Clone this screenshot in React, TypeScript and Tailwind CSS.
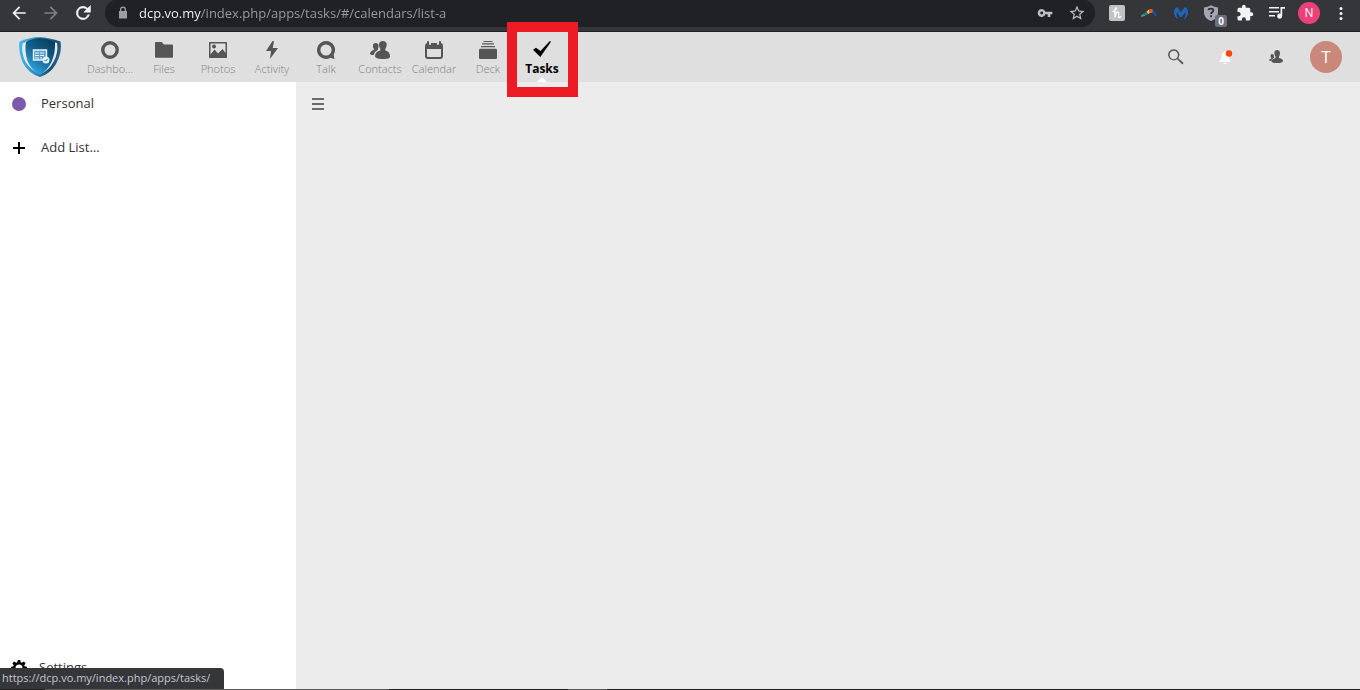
import type { ReactNode } from "react";

function Svg({ box = "0 0 24 24", className, children }: { box?: string; className: string; children: ReactNode }) {
  return (
    <svg viewBox={box} className={className} fill="currentColor" aria-hidden="true">
      {children}
    </svg>
  );
}

function ToolButton({ label, className = "", children }: { label: string; className?: string; children: ReactNode }) {
  return (
    <button type="button" aria-label={label} className={`relative flex h-8 w-8 shrink-0 items-center justify-center ${className}`}>
      {children}
    </button>
  );
}

function BrowserBar() {
  return (
    <div className="h-8 border-b border-[#1f2023] bg-[#35363a] text-[#f1f3f4]">
      <div className="flex h-[26px] items-center pl-[3px] pr-[3px]">
        <ToolButton label="Back">
          <Svg className="h-5 w-5">
            <path d="M20 11H7.8l5.6-5.6L12 4l-8 8 8 8 1.4-1.4L7.8 13H20z" />
          </Svg>
        </ToolButton>
        <ToolButton label="Forward" className="text-[#7f8083]">
          <Svg className="h-5 w-5">
            <path d="M4 11h12.200l-5.600-5.600L12 4l8 8-8 8-1.400-1.400 5.600-5.600H4z" />
          </Svg>
        </ToolButton>
        <ToolButton label="Reload">
          <Svg className="h-5 w-5">
            <path d="M17.650 6.350A8 8 0 1 0 19.730 14h-2.080A6 6 0 1 1 12 6c1.660 0 3.140.690 4.220 1.780L13 11h8V3z" stroke="currentColor" strokeWidth=".6" />
          </Svg>
        </ToolButton>
        <div className="ml-1.5 mr-1.5 flex h-7 min-w-0 flex-1 items-center rounded-full bg-[#202124] pl-2.5 text-[#bdbfc2]">
          <Svg box="0 0 16 16" className="mr-2 h-4 w-4 shrink-0 text-[#9aa0a6]">
            <path d="M5 6V4.500a3 3 0 0 1 6 0V6h1v7.500H4V6zm1.300 0h3.400V4.500a1.700 1.700 0 0 0-3.400 0z" />
          </Svg>
          <input
            type="text"
            aria-label="Address"
            defaultValue="dcp.vo.my/index.php/apps/tasks/#/calendars/list-a"
            className="h-6 min-w-0 flex-1 bg-[linear-gradient(90deg,#ffffff_62px,#9aa0a6_62px)] bg-clip-text text-[13px] text-transparent caret-white outline-none"
          />
          <ToolButton label="Passwords">
            <Svg className="h-4 w-4">
              <path d="M12.650 10A6 6 0 1 0 12.650 14H16v4h4v-4h3v-4zM7 14.200a2.200 2.200 0 1 1 0-4.400 2.200 2.200 0 0 1 0 4.400z" />
            </Svg>
          </ToolButton>
          <ToolButton label="Bookmark this page" className="mr-0.5">
            <Svg className="h-[18px] w-[18px]">
              <path d="M22 9.240l-7.190-.620L12 2 9.190 8.630 2 9.240l5.460 4.730L5.820 21 12 17.270 18.180 21l-1.630-7.030zM12 15.400l-3.760 2.270 1-4.280-3.320-2.880 4.380-.380L12 6.100l1.710 4.040 4.380.380-3.320 2.880 1 4.280z" />
            </Svg>
          </ToolButton>
        </div>
        <ToolButton label="Honey">
          <svg viewBox="0 0 16 16" className="h-4 w-4" aria-hidden="true">
            <rect width="16" height="16" rx="2" fill="#c3c3c3" />
            <path d="M4 6.500C6.500 6 8.200 3 7 2.800 5.600 2.800 6 7 6 12.500 6.300 9.500 7.500 7 9 7c1.500.2.200 3.600.7 5.200.4.600 1.300.4 2-.7" fill="none" stroke="#fff" strokeWidth="1.300" strokeLinecap="round" />
          </svg>
        </ToolButton>
        <ToolButton label="Boomerang">
          <svg viewBox="0 0 16 10" className="h-2.5 w-4" fill="none" aria-hidden="true">
            <path d="M0 9.300L.3 7 3 5.500 4.300 7.800z" fill="#34a853" />
            <path d="M3 5.500L5.500 3.500 7 6 4.300 7.800z" fill="#1976d2" />
            <path d="M5.500 3.500L8 1.500 9 5 7 6z" fill="#fbc02d" />
            <path d="M8 1.500Q10 .5 12 1.800L11.500 5 9 5z" fill="#ef5335" />
            <path d="M12 1.800Q14.500 4 16 8L14 8.200 11.500 5z" fill="#075ba5" />
          </svg>
        </ToolButton>
        <ToolButton label="Malwarebytes">
          <svg viewBox="0 0 16 14" className="h-3.5 w-4" aria-hidden="true">
            <path d="M4.300 1L8 6.500 11.700 1C14 2 15.200 4.300 15 7c-.1 3-1.800 5.300-4.500 6 1.800-2 2.400-4 1.700-7L8.700 11H7.300L3.800 6c-.7 3-.1 5 1.700 7C2.800 12.300 1.100 10 1 7 .800 4.300 2 2 4.300 1z" fill="#1e66bd" />
          </svg>
        </ToolButton>
        <ToolButton label="Privacy shield">
          <svg viewBox="0 0 16 16" className="mr-1 h-4 w-4" aria-hidden="true">
            <path d="M1 2.500Q5 2 8 .3q3 1.700 7 2.200V8q0 5-7 8-7-3-7-8z" fill="#a5a6b5" />
            <path d="M5.500 5.200Q5.700 3.700 8 3.700t2.300 1.700C10.300 7 8 7 8 9M8 10.300v1.900" fill="none" stroke="#2f3035" strokeWidth="1.800" />
          </svg>
          <span className="absolute right-0.5 bottom-0.5 flex h-3 w-3 items-center justify-center rounded-xs bg-[#6d6f7d] text-[10px] font-bold text-white">0</span>
        </ToolButton>
        <ToolButton label="Extensions">
          <Svg className="h-[18px] w-[18px]">
            <path d="M20.500 11H19V7a2 2 0 0 0-2-2h-4V3.500a2.500 2.500 0 0 0-5 0V5H4a2 2 0 0 0-1.990 2v3.800H3.500a2.700 2.700 0 0 1 0 5.400H2V20a2 2 0 0 0 2 2h3.800v-1.500a2.700 2.700 0 0 1 5.400 0V22H17a2 2 0 0 0 2-2v-4h1.500a2.500 2.500 0 0 0 0-5z" />
          </Svg>
        </ToolButton>
        <ToolButton label="Media controls">
          <Svg box="0 0 16 14" className="h-3.5 w-4">
            <path d="M0 1h10v1.600H0zM0 5h10v1.600H0zM0 9h6v1.600H0zM11.500 1H16v1.800h-2.800v7.400a2.500 2.500 0 1 1-1.700-2.400z" />
          </Svg>
        </ToolButton>
        <ToolButton label="Profile">
          <span className="flex h-[22px] w-[22px] items-center justify-center rounded-full bg-[#ec407a] text-xs text-white">N</span>
        </ToolButton>
        <ToolButton label="Browser menu">
          <Svg box="0 0 4 16" className="h-4 w-1">
            <circle cx="2" cy="3.500" r="1.500" />
            <circle cx="2" cy="8.500" r="1.500" />
            <circle cx="2" cy="13.500" r="1.500" />
          </Svg>
        </ToolButton>
      </div>
    </div>
  );
}

function Logo() {
  return (
    <svg viewBox="0 0 42 42" className="h-[42px] w-[42px]" aria-hidden="true">
      <defs>
        <linearGradient id="rim" x1="0" y1="0.300" x2="1" y2="0.500">
          <stop offset="0" stopColor="#42b5ea" />
          <stop offset="0.500" stopColor="#2b8bc2" />
          <stop offset="0.800" stopColor="#174d70" />
          <stop offset="1" stopColor="#2d6990" />
        </linearGradient>
        <linearGradient id="face" x1="0.900" y1="0" x2="0.300" y2="1">
          <stop offset="0" stopColor="#0c3854" />
          <stop offset="0.500" stopColor="#12628e" />
          <stop offset="1" stopColor="#35ace4" />
        </linearGradient>
      </defs>
      <path d="M21 1q9 .5 20.500 4.500Q43.500 16 37 28q-6 10-16 13Q10 38 4 27-1 16 .5 5.500 11 1 21 1z" fill="url(#rim)" />
      <path d="M21 3q8 .5 17 4 1.500 9-3 18-5 10-14 13Q11 34 6 25 2 16 3.500 7.500 12 3 21 3z" fill="#e7eaec" />
      <path d="M21 2q8 .500 15 4 .500 10-3 19-4 9-12 14Q12 34 8.500 25 5.500 15 7 6 14 2 21 2z" fill="url(#face)" />
      <path d="M14.500 14h13v10h-13z" fill="#5c9ec7" stroke="#e6f5fd" strokeWidth="1.400" />
      <path d="M16 17h10M16 19.500h10M16 22h7" stroke="#e6f5fd" strokeWidth="1" strokeDasharray="4 1" />
      <circle cx="27" cy="24" r="3.500" fill="#dff3fd" />
      <path d="M25.500 24l1.200 1.200 2.200-2.500" fill="none" stroke="#2a83b6" />
    </svg>
  );
}

const apps: { name: string; icon: ReactNode }[] = [
  { name: "Dashbo…", icon: <circle cx="10" cy="10" r="7.200" fill="none" stroke="currentColor" strokeWidth="3.400" /> },
  { name: "Files", icon: <path d="M1.500 2h6.300l2 2.500h8.400q.8 0 .8.800V17q0 .8-.8.800H1.800Q1 17.800 1 17V2.700q0-.7.500-.7z" /> },
  {
    name: "Photos",
    icon: (
      <path fillRule="evenodd" d="M1.500 2h17q.5 0 .5.500v15q0 .5-.5.500h-17Q1 18 1 17.500v-15q0-.5.500-.500zM2.500 3.500v11l4-5 3.500 4 4.500-4.500 3 4V3.500zM6 4.500a2 2 0 1 1 0 4 2 2 0 0 1 0-4z" />
    ),
  },
  { name: "Activity", icon: <path d="M10.500 1L4 11h5L8 19l8-11h-5.200l1.200-7z" /> },
  {
    name: "Talk",
    icon: <path fillRule="evenodd" d="M10 1a9 9 0 1 0 4.700 16.700q2 1.500 4 1-.8-1.700-1-4A9 9 0 0 0 10 1zm0 3.400a5.600 5.600 0 1 1 0 11.200 5.600 5.600 0 0 1 0-11.200z" />,
  },
  {
    name: "Contacts",
    icon: (
      <path d="M12.800 1C10.600 1 9 2.300 9 4.500c0 2 .6 3.300 1.300 4.200v1.800q-5 1.200-5.300 5.500c0 2 3 3 8 3s7-.7 7-2.500q0-5-4.700-6V8.700c.8-1 1.400-2.300 1.400-4.200C16.700 2.300 15 1 12.800 1zM5.700 3C4 3 2.900 4 2.900 5.700c0 1.500.4 2.200 1 3v1.300Q.3 11 0 13.500c0 1 1.500 1.500 3.600 1.500Q4.500 11.500 8 9.800V8.500c.3-.5.500-1 .500-2.800C8.500 4 7.500 3 5.700 3z" />
    ),
  },
  {
    name: "Calendar",
    icon: (
      <path fillRule="evenodd" d="M4 1q1 0 1 1v2q0 1 1 1t1-1V3h6v1q0 1 1 1t1-1V2q0-1 1-1t1 1v1q2 .3 2 2.500V16q0 3-3 3H4q-3 0-3-3V5.500Q1 3.500 3 3V2q0-1 1-1zM3 9v7q0 1 1 1h12q1 0 1-1V9z" />
    ),
  },
  { name: "Deck", icon: <path d="M5.500 1h9v1h-9zM4 3.300h12v1.200H4zM3 6h14v1.200H3zM1.700 8.800h16.600L19 10v8q0 1-1 1H2q-1 0-1-1v-8z" /> },
  { name: "Tasks", icon: <path d="M1 9.800L8.300 17 19 1.800 17.800 1 8.500 11 4 7.800z" /> },
];

function AppHeader() {
  return (
    <header className="flex h-[50px] items-center bg-[#dfdfdf] pl-[19px] pr-[18px]">
      <a href="#home" aria-label="Home" className="mr-[22px] shrink-0">
        <Logo />
      </a>
      <nav aria-label="Apps" className="flex h-full">
        {apps.map(({ name, icon }) => {
          const active = name === "Tasks";
          return (
            <a
              key={name}
              href={`#${name}`}
              aria-current={active ? "page" : undefined}
              className={`relative flex h-full w-[54px] flex-col items-center pt-2 ${active ? "text-xs font-bold text-black" : "text-[11px] font-light text-[#555555]"}`}
            >
              <Svg box="0 0 20 20" className="h-5 w-5">
                {icon}
              </Svg>
              <span className={`leading-[18px] ${active ? "" : "text-[#808080]"}`}>{name}</span>
              {active && (
                <>
                  <svg viewBox="0 0 10 5" className="absolute bottom-0 h-[5px] w-2.5" aria-hidden="true">
                    <path d="M0 5l5-5 5 5z" fill="#fff" />
                  </svg>
                  <span className="pointer-events-none absolute -top-2.5 -right-[9px] -bottom-[15px] -left-2 z-10 border-10 border-[#ed1c24]" />
                </>
              )}
            </a>
          );
        })}
      </nav>
      <div className="ml-auto flex items-center text-[#555555]">
        <button type="button" aria-label="Search" className="flex h-12 w-[50px] items-center justify-center">
          <Svg box="0 0 16 16" className="h-[18px] w-[18px]">
            <path fillRule="evenodd" d="M6 1a5 5 0 1 0 3 9l4.600 4.600 1.200-1.200L10 9A5 5 0 0 0 6 1zm0 1.500a3.700 3.700 0 1 1 0 7.400 3.700 3.700 0 0 1 0-7.400z" />
          </Svg>
        </button>
        <button type="button" aria-label="Notifications" className="flex h-12 w-[50px] items-center justify-center">
          <svg viewBox="0 0 16 16" className="h-4 w-4" aria-hidden="true">
            <path d="M7 2.500C4.500 3 3.700 5 3.700 7.500v2L1.500 12v1h11v-1L11 9.500v-4L8 2.500zM5 14q2 2 4 0z" fill="#fff" />
            <circle cx="11" cy="4.500" r="3.200" fill="#ff4402" />
          </svg>
        </button>
        <button type="button" aria-label="Contacts menu" className="flex h-12 w-[50px] items-center justify-center">
          <Svg box="0 0 16 16" className="h-4 w-4">
            <path d="M9 1Q6.500 1 6.300 4q.1 2 1.200 3.500V9q-3 .5-4 2.500-.5 2.500 5 2.500 6.500 0 6.500-2 0-2.200-4-3V7.500Q12 6 12 4 11.800 1 9 1zM4 5Q2.500 5 2.500 7q0 1 .8 1.800v.7Q1 10 1 11.300q0 .7 2 .7.500-2 3-3.200Q6.200 5 4 5z" />
          </Svg>
        </button>
        <button type="button" aria-label="Account" className="ml-[9px] flex h-8 w-8 items-center justify-center rounded-full bg-[#c98879] text-[17px] text-white">
          T
        </button>
      </div>
    </header>
  );
}

export default function App() {
  return (
    <div className="flex min-h-screen flex-col bg-[#ececec] font-['Open_Sans','Noto_Sans',sans-serif]">
      <BrowserBar />
      <AppHeader />
      <div className="flex flex-1">
        <aside className="flex w-[296px] shrink-0 flex-col bg-white text-[13px] text-[#333333]">
          <a href="#personal" className="flex h-11 items-center pl-3">
            <span className="mr-[15px] h-3.5 w-3.5 rounded-full bg-[#7c5aab]" />
            Personal
          </a>
          <button type="button" className="flex h-11 items-center pl-3 text-left">
            <Svg box="0 0 14 14" className="mr-[15px] h-3.5 w-3.5 text-black">
              <path d="M6 1h2v5h5v2H8v5H6V8H1V6h5z" />
            </Svg>
            Add List…
          </button>
          <button type="button" className="mt-auto flex h-[42px] items-center pl-[11px] text-left">
            <Svg box="0 0 16 16" className="mr-3 h-4 w-4 text-black">
              <path fillRule="evenodd" d="M6.800 0h2.400l.5 2.300 1.200.5 2-1.300 1.700 1.700-1.300 2 .5 1.200 2.200.4v2.400l-2.300.5-.5 1.200 1.300 2-1.700 1.700-2-1.300-1.200.5L9.200 16H6.800l-.5-2.200-1.200-.5-2 1.300-1.700-1.700 1.300-2-.5-1.200L0 9.200V6.800l2.200-.4.5-1.200-1.300-2 1.700-1.700 2 1.300 1.200-.5zM8 4.500a3.500 3.500 0 1 0 0 7 3.500 3.500 0 0 0 0-7z" />
            </Svg>
            Settings
          </button>
        </aside>
        <main className="flex-1">
          <button type="button" aria-label="Toggle navigation" className="flex h-11 w-11 items-center justify-center text-[#6b6b6b]">
            <Svg box="0 0 12 12" className="h-3 w-3">
              <path d="M0 0h12v2H0zM0 5h12v2H0zM0 10h12v2H0z" />
            </Svg>
          </button>
        </main>
      </div>
      <div className="flex h-px bg-[#1e1e1e]">
        <span className="ml-[45px] w-[344px] bg-[#5a5a5a]" />
        <span className="ml-[179px] w-[39px] bg-[#5a5a5a]" />
      </div>
      <div className="fixed bottom-px left-0 flex h-[21px] w-[224px] items-center rounded-tr bg-[#35363a] pl-0.5 text-[11px] text-[#c3c8cf]">
        https://dcp.vo.my/index.php/apps/tasks/
      </div>
    </div>
  );
}
